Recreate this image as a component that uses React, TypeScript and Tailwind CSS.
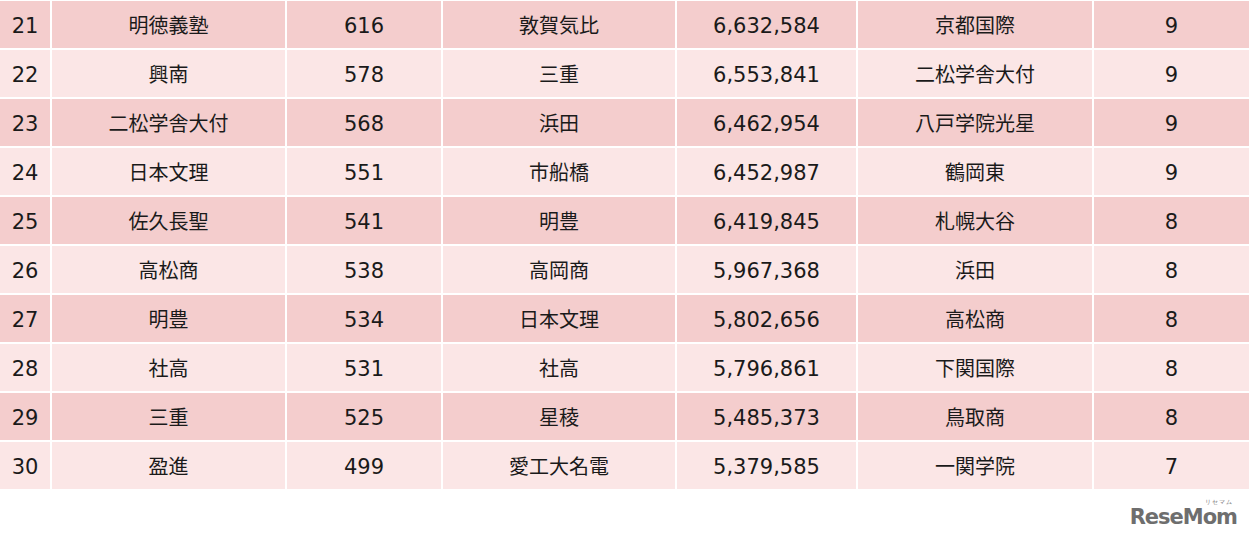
const rows: [string, string, string, string, string, string, string][] = [
  ["21", "明徳義塾", "616", "敦賀気比", "6,632,584", "京都国際", "9"],
  ["22", "興南", "578", "三重", "6,553,841", "二松学舎大付", "9"],
  ["23", "二松学舎大付", "568", "浜田", "6,462,954", "八戸学院光星", "9"],
  ["24", "日本文理", "551", "市船橋", "6,452,987", "鶴岡東", "9"],
  ["25", "佐久長聖", "541", "明豊", "6,419,845", "札幌大谷", "8"],
  ["26", "高松商", "538", "高岡商", "5,967,368", "浜田", "8"],
  ["27", "明豊", "534", "日本文理", "5,802,656", "高松商", "8"],
  ["28", "社高", "531", "社高", "5,796,861", "下関国際", "8"],
  ["29", "三重", "525", "星稜", "5,485,373", "鳥取商", "8"],
  ["30", "盈進", "499", "愛工大名電", "5,379,585", "一関学院", "7"],
];

export default function App() {
  return (
    <div className="h-[540px] w-[1249px] bg-white font-['DejaVu_Sans','Noto_Sans_CJK_JP',sans-serif] text-[20px] text-[#1a1a1a]">
      <div className="flex flex-col gap-[2px] pt-px">
        {rows.map((r, i) => (
          <div
            key={r[0]}
            className="grid h-[47px] grid-cols-[50px_233px_154px_232px_179px_234px_1fr] gap-x-[2px]"
          >
            {r.map((cell, j) => (
              <div
                key={j}
                className={`flex items-center justify-center ${
                  j % 2 === 0 ? "pt-[5px] text-[21px]" : "pt-[2px] text-[20px]"
                } ${i % 2 === 0 ? "bg-[#f4cdcd]" : "bg-[#fbe6e6]"}`}
              >
                {cell}
              </div>
            ))}
          </div>
        ))}
      </div>
      <div className="flex justify-end pr-[12px] pt-[18px]">
        <div className="relative font-['DejaVu_Sans',sans-serif] text-[21px] font-bold leading-none tracking-[-1px] text-[#6e6e6e]">
          ReseMom
          <span className="absolute -top-[8px] right-[4px] text-[6px] font-normal tracking-[1px]">
            リセマム
          </span>
        </div>
      </div>
    </div>
  );
}
